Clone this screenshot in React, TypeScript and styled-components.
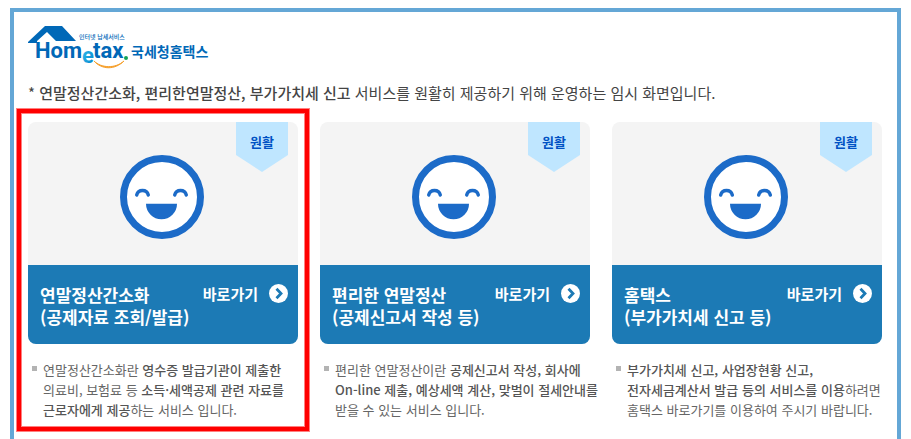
import React from "react";
import styled, { createGlobalStyle } from "styled-components";

const sans = '"Noto Sans CJK KR", "Noto Sans", sans-serif';

const GlobalStyle = createGlobalStyle`
  *, *::before, *::after { box-sizing: border-box; }
  body {
    margin: 0;
    background: #fff;
    color: #444;
    font-family: ${sans};
  }
`;

const Frame = styled.main`
  display: flex;
  flex-direction: column;
  min-height: calc(100vh - 8px);
  margin: 8px 10px 0;
  padding: 14px 15px 16px 14px;
  border: 4px solid #64a7d6;
  border-bottom: 0;
`;

const Brand = styled.a`
  display: block;
  width: 180px;
  height: 42px;
`;

const LogoArt = styled.svg`
  display: block;
  width: 100%;
  height: 100%;
  overflow: visible;
`;

const Notice = styled.p`
  margin: 14px 0 0;
  font-size: 15px;
  line-height: 22px;
  color: #444;
`;

const NoticeStrong = styled.strong`
  font-weight: 500;
`;

const Services = styled.ul`
  display: grid;
  grid-template-columns: repeat(3, minmax(0, 1fr));
  gap: 22px;
  margin: 18px 0 0;
  padding: 0;
  list-style: none;
`;

const Service = styled.li`
  position: relative;
`;

const Highlight = styled.div`
  position: absolute;
  inset: -13px -11px -11px -11px;
  border: 4px solid #f00;
  box-shadow: 0 0 0 1px #ff8080, inset 0 0 0 1px #ff8080;
  pointer-events: none;
`;

const Card = styled.article`
  position: relative;
  overflow: hidden;
  border-radius: 8px;
  background: #f4f4f4;
`;

const Status = styled.span`
  position: absolute;
  top: 0;
  right: 10px;
  width: 52px;
  height: 50px;
  font-size: 13px;
  font-weight: 700;
  line-height: 40px;
  text-align: center;
  color: #0052c4;
  background: #bfe6ff;
  clip-path: polygon(0 0, 100% 0, 100% 66%, 50% 100%, 0 66%);
`;

const Face = styled.div`
  display: flex;
  justify-content: center;
  padding: 33px 2px 26px 0;
`;

const CardFooter = styled.div`
  padding: 19px 10px 16px 12px;
  color: #fff;
  background: #1c7ab5;
`;

const TitleRow = styled.div`
  display: flex;
  justify-content: space-between;
  align-items: flex-start;
  height: 22px;
`;

const Title = styled.h2`
  margin: 0;
  font-size: 17px;
  font-weight: 700;
  line-height: 22px;
  white-space: nowrap;
`;

const Subtitle = styled.p`
  margin: 0;
  font-size: 17px;
  font-weight: 700;
  line-height: 22px;
`;

const GoLink = styled.a`
  display: flex;
  align-items: center;
  gap: 11px;
  font-size: 15px;
  font-weight: 700;
  line-height: 19px;
  color: #fff;
  text-decoration: none;
`;

const Description = styled.p`
  display: grid;
  grid-template-columns: 5px 1fr;
  column-gap: 6px;
  margin: 16px 0 0 4px;
  font-size: 13px;
  line-height: 20px;
  color: #666;
  white-space: nowrap;

  &::before {
    content: "";
    height: 5px;
    margin-top: 6px;
    background: #b3b3b3;
  }

  b { font-weight: 500; color: #555; }
`;

function Logo() {
  return (
    <LogoArt viewBox="0 0 180 42" role="img" aria-label="Hometax 국세청홈택스">
      <defs>
        <linearGradient id="cyan" x1="0" y1="0" x2="1" y2="1">
          <stop offset="0" stopColor="#35c5ee" />
          <stop offset="1" stopColor="#0080cc" />
        </linearGradient>
      </defs>
      <path d="M0 16 17 0H34L48 15H28L19 6 9 15V17H0Z" fill="#0068b7" />
      <text x="51" y="13" fontSize="6" fontWeight="500" fill="#0068b7">인터넷 납세서비스</text>
      <g fontFamily='Roboto, sans-serif' fontWeight="700" fontSize="22" fill="#0068b7">
        <text x="7" y="32">Hom</text>
        <text x="65" y="32">tax</text>
        <text x="54" y="37" fontSize="22" fill="url(#cyan)">e</text>
      </g>
      <circle cx="98" cy="32" r="2" fill="#13a457" />
      <path d="M66 35C73 42 87 43 96 35 87 44 74 44 66 35Z" fill="#f6a02c" stroke="#f6a02c" />
      <text x="103" y="31" fontSize="14" fontWeight="700" fill="#0068b7">국세청홈택스</text>
    </LogoArt>
  );
}

function Smile() {
  return (
    <svg width="84" height="84" viewBox="0 0 84 84" fill="none" aria-hidden="true">
      <circle cx="42" cy="42" r="38.5" fill="#fff" stroke="#1c6bc8" strokeWidth="7" />
      <path d="M16.7 40C18.2 34 26.8 34 28.3 40M54.7 40C56.2 34 64.8 34 66.3 40" stroke="#1c6bc8" strokeWidth="3.4" strokeLinecap="round" />
      <path d="M26 48.8H57A15.5 15.5 0 0 1 26 48.8Z" fill="#1c6bc8" />
    </svg>
  );
}

function ArrowDisc() {
  return (
    <svg width="19" height="19" viewBox="0 0 19 19" fill="none" aria-hidden="true">
      <circle cx="9.5" cy="9.5" r="9.5" fill="#fff" />
      <path d="M7.5 4.8 12 9.5 7.5 14.2" stroke="#1c7ab5" strokeWidth="2.8" />
    </svg>
  );
}

const services = [
  {
    title: "연말정산간소화",
    subtitle: "(공제자료 조회/발급)",
    highlighted: true,
    text: (
      <>
        연말정산간소화란 <b>영수증 발급기관이 제출한</b><br />
        의료비, 보험료 등 <b>소득·세액공제 관련 자료를</b><br />
        <b>근로자에게 제공</b>하는 서비스 입니다.
      </>
    ),
  },
  {
    title: "편리한 연말정산",
    subtitle: "(공제신고서 작성 등)",
    highlighted: false,
    text: (
      <>
        편리한 연말정산이란 <b>공제신고서 작성, 회사에</b><br />
        <b>On-line 제출, 예상세액 계산, 맞벌이 절세안내를</b><br />
        받을 수 있는 서비스 입니다.
      </>
    ),
  },
  {
    title: "홈택스",
    subtitle: "(부가가치세 신고 등)",
    highlighted: false,
    text: (
      <>
        <b>부가가치세 신고, 사업장현황 신고,</b><br />
        <b>전자세금계산서 발급 등의 서비스를 이용</b>하려면<br />
        홈택스 바로가기를 이용하여 주시기 바랍니다.
      </>
    ),
  },
];

export default function App() {
  return (
    <>
      <GlobalStyle />
      <Frame lang="ko">
        <Brand href="#home"><Logo /></Brand>
        <Notice>
          * <NoticeStrong>연말정산간소화, 편리한연말정산, 부가가치세 신고</NoticeStrong> 서비스를 원활히 제공하기 위해 운영하는 임시 화면입니다.
        </Notice>
        <Services>
          {services.map(({ title, subtitle, highlighted, text }) => (
            <Service key={title}>
              <Card>
                <Face><Smile /></Face>
                <Status>원활</Status>
                <CardFooter>
                  <TitleRow>
                    <Title>{title}</Title>
                    <GoLink href="#go">바로가기 <ArrowDisc /></GoLink>
                  </TitleRow>
                  <Subtitle>{subtitle}</Subtitle>
                </CardFooter>
              </Card>
              <Description><span>{text}</span></Description>
              {highlighted && <Highlight />}
            </Service>
          ))}
        </Services>
      </Frame>
    </>
  );
}
